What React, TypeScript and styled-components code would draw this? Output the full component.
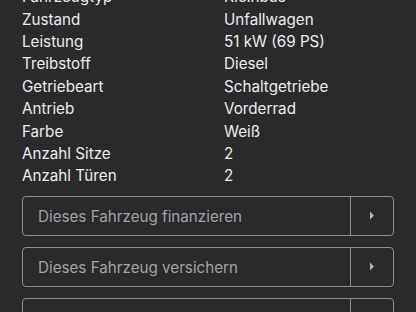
import React from "react";
import styled, { createGlobalStyle } from "styled-components";

const GlobalStyle = createGlobalStyle`
  html, body {
    margin: 0;
    padding: 0;
    background: #2a2a2c;
    overflow: hidden;
  }
`;

const Page = styled.div`
  width: 416px;
  height: 312px;
  overflow: hidden;
  background: #2a2a2c;
  font-family: Inter, "Noto Sans", sans-serif;
  box-sizing: border-box;
  padding: 0 22px;
`;

// content is scrolled, first row is cut at the top
const Specs = styled.div`
  margin-top: -14.4px;
  display: grid;
  grid-template-columns: 202px 1fr;
  grid-auto-rows: 22.4px;
  align-items: center;
  font-size: 15.2px;
  color: #ededed;
`;

const Cell = styled.div`
  white-space: nowrap;
`;

const Actions = styled.div`
  margin-top: 8.4px;
  display: flex;
  flex-direction: column;
  gap: 11px;
`;

const ActionButton = styled.button`
  box-sizing: border-box;
  height: 40px;
  width: 372px;
  padding: 0;
  display: flex;
  align-items: stretch;
  background: transparent;
  border: 1px solid #8c8c8e;
  border-radius: 4px;
  font-family: inherit;
  cursor: pointer;
`;

const ActionLabel = styled.span`
  flex: 1;
  display: flex;
  align-items: center;
  padding: 2px 0 0 15px;
  font-size: 15.2px;
  color: #a2a2a4;
  text-align: left;
`;

const ArrowBox = styled.span`
  width: 42px;
  border-left: 1px solid #8c8c8e;
  display: flex;
  align-items: center;
  justify-content: center;
`;

const Arrow = () => (
  <svg width="6" height="9" viewBox="0 0 6 9">
    <path d="M1 0.5 L5 4.5 L1 8.5 Z" fill="#b4b4b6" />
  </svg>
);

const specs: [string, string][] = [
  ["Fahrzeugtyp", "Kleinbus"],
  ["Zustand", "Unfallwagen"],
  ["Leistung", "51 kW (69 PS)"],
  ["Treibstoff", "Diesel"],
  ["Getriebeart", "Schaltgetriebe"],
  ["Antrieb", "Vorderrad"],
  ["Farbe", "Weiß"],
  ["Anzahl Sitze", "2"],
  ["Anzahl Türen", "2"]
];

const actions = ["Dieses Fahrzeug finanzieren", "Dieses Fahrzeug versichern", "Dieses Fahrzeug bewerten"];

export default function App() {
  return (
    <>
      <GlobalStyle />
      <Page>
        <Specs>
          {specs.map(([k, v]) => (
            <React.Fragment key={k}>
              <Cell>{k}</Cell>
              <Cell>{v}</Cell>
            </React.Fragment>
          ))}
        </Specs>
        <Actions>
          {actions.map((a) => (
            <ActionButton key={a}>
              <ActionLabel>{a}</ActionLabel>
              <ArrowBox>
                <Arrow />
              </ArrowBox>
            </ActionButton>
          ))}
        </Actions>
      </Page>
    </>
  );
}
